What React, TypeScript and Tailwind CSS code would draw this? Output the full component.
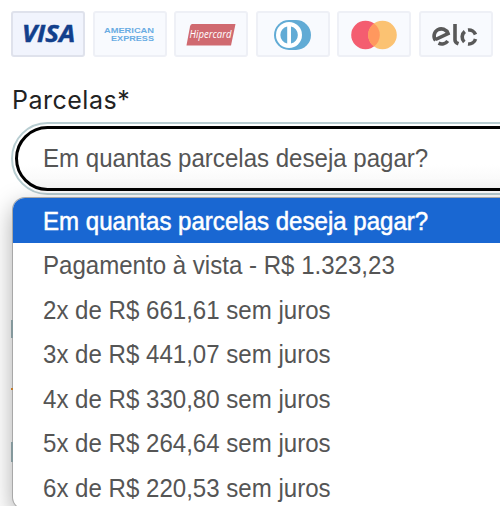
import type { ReactNode } from 'react';

const OPTIONS = [
  'Em quantas parcelas deseja pagar?',
  'Pagamento à vista - R$ 1.323,23',
  '2x de R$ 661,61 sem juros',
  '3x de R$ 441,07 sem juros',
  '4x de R$ 330,80 sem juros',
  '5x de R$ 264,64 sem juros',
  '6x de R$ 220,53 sem juros',
];

const Card = ({ active, children }: { active?: boolean; children: ReactNode }) => (
  <div
    className={
      active
        ? 'h-[46px] w-[74px] shrink-0 rounded-[3px] border-2 border-[#dfe2ec] bg-[#f1f4fd]'
        : 'h-[46px] w-[74px] shrink-0 rounded-[3px] border-2 border-[#eef0f6] bg-[#f8fafe]'
    }
  >
    <svg viewBox="0 0 70 42" className="h-full w-full">
      {children}
    </svg>
  </div>
);

const CardBrands = () => (
  <div className="flex gap-[7.5px] pl-[11px]">
    <Card active>
      <text x="9" y="29" fontFamily="Open Sans" fontSize="22.5" fontWeight="700" fontStyle="italic" fill="#123f8c" stroke="#123f8c" strokeWidth="0.5" textLength="53" lengthAdjust="spacingAndGlyphs">
        VISA
      </text>
    </Card>
    <Card>
      <g fontFamily="Liberation Sans" fontSize="7.8" fontWeight="700" fill="#69ace3">
        <text x="9" y="20" textLength="50" lengthAdjust="spacingAndGlyphs">AMERICAN</text>
        <text x="16" y="28.2" textLength="43" lengthAdjust="spacingAndGlyphs">EXPRESS</text>
      </g>
    </Card>
    <Card>
      <path d="M16 11H59.500L55 32.500H10.500L14 13.500Q14.500 11 16 11Z" fill="#d06a70" />
      <text x="13.5" y="25" fontFamily="Open Sans" fontSize="10" fontStyle="italic" fill="#fff" textLength="42" lengthAdjust="spacingAndGlyphs">
        Hipercard
      </text>
    </Card>
    <Card>
      <path d="M31 7H38A15 15 0 0 1 38 37H31A15 15 0 0 1 31 7Z" fill="#61abd5" />
      <circle cx="31" cy="22" r="13" fill="#fff" />
      <path d="M29.200 13.500A8.700 8.700 0 0 0 29.200 30.500ZM33 13.500A8.700 8.700 0 0 1 33 30.500Z" fill="#61abd5" />
    </Card>
    <Card>
      <circle cx="26.500" cy="22" r="14.300" fill="#f45d70" />
      <circle cx="43.500" cy="22" r="14.300" fill="#fbc272" />
      <path d="M35 10.500A14.300 14.300 0 0 1 35 33.500A14.300 14.300 0 0 1 35 10.500Z" fill="#ff985e" />
    </Card>
    <Card>
      <g fill="none" stroke="#595959" strokeWidth="3.600">
        <path d="M14.600 27.500A7.200 7.200 0 1 1 27 20.500L14.600 26.500M17.500 30.200A7.500 7.500 0 0 0 26.800 28" />
        <path d="M34 11V27Q34 29.500 37.500 30.800" />
        <path d="M43.800 18.500A7 7 0 0 0 43.300 29M47 17A7 7 0 0 1 54.500 21.500M54.500 26A7 7 0 0 1 47 31" />
      </g>
    </Card>
  </div>
);

const Select = () => (
  <div className="relative ml-[11px] mt-[7px] w-[560px]">
    <div className="h-[73px] rounded-[37px] border-2 border-[#b8cdd1] bg-white p-[2px]">
      <div className="flex h-full items-center rounded-[33px] border-[3px] border-black bg-linear-to-b from-white from-60% to-[#f7f7f7] pl-[25px] text-[25px] leading-none text-[#555]">
        <span className="origin-left scale-x-[0.9625] whitespace-nowrap">{OPTIONS[0]}</span>
      </div>
    </div>
    <ul className="absolute left-[2px] top-[76px] h-[311px] w-full overflow-hidden rounded-[12px] bg-white shadow-[0_0_0_1px_#a8a8a8,0_8px_24px_rgba(0,0,0,0.35)]">
      {OPTIONS.map((option, i) => (
        <li
          key={option}
          className={
            i === 0
              ? 'flex h-[44.5px] items-center bg-[#1967d2] pl-[30px] pt-[2px] text-[25px] leading-none text-white [-webkit-text-stroke:0.5px_white]'
              : 'flex h-[44.5px] items-center pl-[30px] pt-[2px] text-[25px] leading-none text-[#555]'
          }
        >
          <span className="origin-left scale-x-[0.9625] whitespace-nowrap">{option}</span>
        </li>
      ))}
    </ul>
    {/* edges of the fields covered by the open list */}
    <span className="absolute left-0 top-[198px] h-[18px] w-[1.5px] bg-[#84989c]" />
    <span className="absolute left-0 top-[266px] h-[2px] w-[2px] bg-[#c07a2c]" />
    <span className="absolute left-0 top-[320px] h-[20px] w-[1.5px] bg-[#84989c]" />
  </div>
);

export default function App() {
  return (
    <main className="h-[506px] w-[500px] overflow-hidden bg-white pt-[11px] font-['Liberation_Sans',Arial,sans-serif]">
      <CardBrands />
      <label className="ml-[12px] mt-[29px] block h-[29px] font-['Inter',sans-serif] text-[25px] leading-[29px] tracking-[0.5px] text-[#222]">
        Parcelas*
      </label>
      <Select />
    </main>
  );
}
